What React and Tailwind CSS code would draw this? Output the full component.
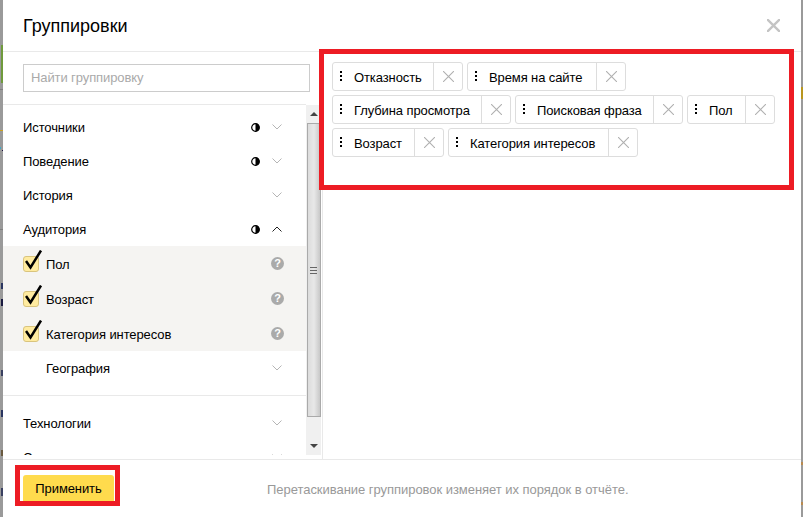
import React from 'react';

const font = { fontFamily: '"Liberation Sans", Arial, sans-serif' };

// Иконки
const Chevron = ({ up }) => (
  <svg width="10" height="6" viewBox="0 0 10 6" fill="none" className={up ? 'text-[#222]' : 'text-[#b5b5b5]'}>
    <path d={up ? 'M0.5 5.5L5 1L9.5 5.5' : 'M0.5 0.5L5 5L9.5 0.5'} stroke="currentColor" strokeWidth="1" />
  </svg>
);

const Half = () => (
  <svg width="9" height="9" viewBox="0 0 9 9">
    <circle cx="4.5" cy="4.5" r="3.8" fill="#fff" stroke="#000" strokeWidth="1.2" />
    <path d="M4.5 0.5A4 4 0 0 1 4.5 8.5Z" fill="#000" />
  </svg>
);

const Help = () => (
  <div className="w-[13px] h-[13px] rounded-full bg-[#aaaaaa] flex items-center justify-center text-white text-[11px] leading-none font-bold">?</div>
);

const Cross = ({ size = 11, color = '#b0b0b0', width = 1 }) => (
  <svg width={size} height={size} viewBox="0 0 10 10" fill="none">
    <path d="M0 0L10 10M10 0L0 10" stroke={color} strokeWidth={width} />
  </svg>
);

const Check = () => (
  <div className="relative w-[16px] h-[16px] shrink-0 rounded-[3px] bg-[#ffeba0] border border-[#d9c47e]">
    <svg width="20" height="22" viewBox="0 0 20 22" fill="none" className="absolute left-[1px] top-[-7px]">
      <path d="M1 11L5.5 17.5L16 0.5" stroke="#000" strokeWidth="2.5" />
    </svg>
  </div>
);

const Group = ({ label, half, up }) => (
  <div className="h-[34px] flex items-center pl-5 pr-[24px] text-black">
    <span className="flex-1 pt-[2px]">{label}</span>
    {half && <span className="mr-3 flex"><Half /></span>}
    <Chevron up={up} />
  </div>
);

const Checked = ({ label }) => (
  <div className="h-[35px] flex items-center pl-5 pr-[22px]">
    <Check />
    <span className="ml-[7px] flex-1 pt-[3px]">{label}</span>
    <Help />
  </div>
);

const Chip = ({ label, textW }) => (
  <div className="h-[29px] flex items-center rounded-[3px] border border-[#dddddd] bg-white">
    <div className="w-[7px]" />
    <div className="flex flex-col gap-[2px] mb-[2px]">
      <span className="w-[2px] h-[2px] bg-black" />
      <span className="w-[2px] h-[2px] bg-black" />
      <span className="w-[2px] h-[2px] bg-black" />
    </div>
    <span className="ml-[12px] whitespace-nowrap pt-[2px]" style={{ width: textW }}>{label}</span>
    <div className="h-full w-[29px] border-l border-[#dddddd] flex items-center justify-center">
      <Cross />
    </div>
  </div>
);

const Scrollbar = () => (
  <div className="w-[15px] h-[350px] bg-[#f0f0f0] flex flex-col items-center">
    <div className="h-[18px] flex items-center justify-center">
      <div className="w-0 h-0 border-x-[4px] border-x-transparent border-b-[4px] border-b-[#444]" />
    </div>
    <div className="w-[14px] h-[294px] border border-[#aaaaaa] bg-gradient-to-r from-[#dcdcdc] via-[#e8e8e8] to-[#c8c8c8] flex flex-col items-center justify-center gap-[2px]">
      <span className="w-[7px] h-[1px] bg-[#666]" />
      <span className="w-[7px] h-[1px] bg-[#666]" />
      <span className="w-[7px] h-[1px] bg-[#666]" />
    </div>
    <div className="flex-1 flex items-end justify-center pb-[7px]">
      <div className="w-0 h-0 border-x-[4px] border-x-transparent border-t-[4px] border-t-[#444]" />
    </div>
  </div>
);

const App = () => (
  <div className="relative w-[803px] h-[517px] overflow-hidden flex bg-[#9a9a9a] text-[13px] tracking-[-0.1px] text-black" style={font}>
    {/* Полоски страницы за диалогом */}
    <div className="w-[3px] relative shrink-0">
      <div className="absolute left-[1px] top-[45px] w-[2px] h-[38px] bg-[#6f9a3c]" />
      <div className="absolute left-0 top-[89px] w-[3px] h-[1px] bg-[#808080]" />
      <div className="absolute left-0 top-[130px] w-[3px] h-[1px] bg-[#c9a020]" />
      <div className="absolute left-0 top-[147px] w-[1px] h-[2px] bg-[#3fa9c9]" />
      <div className="absolute left-[2px] top-[150px] w-[1px] h-[1px] bg-[#1a1040]" />
      <div className="absolute left-0 top-[229px] w-[3px] h-[1px] bg-[#808080]" />
      <div className="absolute left-[1px] top-[283px] w-[2px] h-[6px] bg-[#2a3560]" />
      <div className="absolute left-[1px] top-[299px] w-[2px] h-[7px] bg-[#1a1a40]" />
      <div className="absolute left-[1px] top-[370px] w-[2px] h-[6px] bg-[#3a4060]" />
      <div className="absolute left-[1px] top-[410px] w-[2px] h-[7px] bg-[#2a3560]" />
      <div className="absolute left-[1px] top-[450px] w-[2px] h-[6px] bg-[#6a5a40]" />
      <div className="absolute left-[1px] top-[488px] w-[2px] h-[8px] bg-[#3a4060]" />
    </div>

    <div className="flex-1 bg-white flex flex-col">
      <div className="h-[52px] shrink-0 border-b border-[#e9e9e9] flex items-center justify-between pl-5 pr-[21px]">
        <h2 className="text-[18px] leading-none pt-[1px] tracking-normal">Группировки</h2>
        <Cross size={13} color="#c4c4c4" width={1.8} />
      </div>

      <div className="flex-1 flex min-h-0">
        <div className="w-[320px] shrink-0 border-r border-[#e9e9e9] flex flex-col">
          <div className="h-[53px] shrink-0 border-b border-[#e9e9e9] w-[303px] pt-3 pl-5">
            <div className="w-[287px] h-[28px] border border-[#cccccc] flex items-center pl-[7px] text-[#aaaaaa]">Найти группировку</div>
          </div>
          <div className="flex items-start pt-0">
            <div className="w-[303px] h-[350px] overflow-hidden pt-[5px]">
              <Group label="Источники" half />
              <Group label="Поведение" half />
              <Group label="История" />
              <Group label="Аудитория" half up />
              <div className="bg-[#f5f4f2]">
                <Checked label="Пол" />
                <Checked label="Возраст" />
                <Checked label="Категория интересов" />
              </div>
              <div className="h-[34px] flex items-center pl-[43px] pr-[24px]">
                <span className="flex-1 pt-[2px]">География</span>
                <Chevron />
              </div>
              <div className="mt-[10px] mb-[10px] border-t border-[#e9e9e9]" />
              <Group label="Технологии" />
              <Group label="Содержание" />
            </div>
            <Scrollbar />
          </div>
        </div>

        <div className="flex-1 pt-[10px] pl-[9px] pr-[10px]">
          <div className="flex flex-wrap gap-x-[4px] gap-y-[4px]">
            <Chip label="Отказность" textW={79} />
            <Chip label="Время на сайте" textW={107} />
            <Chip label="Глубина просмотра" textW={127} />
            <Chip label="Поисковая фраза" textW={116} />
            <Chip label="Пол" textW={36} />
            <Chip label="Возраст" textW={60} />
            <Chip label="Категория интересов" textW={138} />
          </div>
        </div>
      </div>

      <div className="h-[58px] shrink-0 border-t border-[#e9e9e9] flex items-start pl-5">
        <button className="mt-[15px] w-[91px] h-[28px] rounded-[3px] bg-[#ffdb4d] text-black">Применить</button>
        <p className="ml-[153px] mt-[22px] text-[13px] leading-[16px] text-[#999999] tracking-[-0.04px] whitespace-nowrap">Перетаскивание группировок изменяет их порядок в отчёте.</p>
      </div>
    </div>

    <div className="w-[2px] shrink-0 relative">
      <div className="absolute left-0 top-[87px] w-[2px] h-[12px] bg-[#b8961e]" />
      <div className="absolute left-0 top-[462px] w-[2px] h-[3px] bg-[#b88a50]" />
      <div className="absolute left-0 top-[502px] w-[2px] h-[3px] bg-[#b88a50]" />
    </div>

    {/* Красные рамки-пометки поверх скриншота */}
    <div className="absolute left-[319px] top-[49px] w-[475px] h-[141px] border-[5px] border-[#ed1c24]" />
    <div className="absolute left-[15px] top-[465px] w-[105px] h-[41px] border-[5px] border-[#ed1c24]" />
  </div>
);

export default App;
